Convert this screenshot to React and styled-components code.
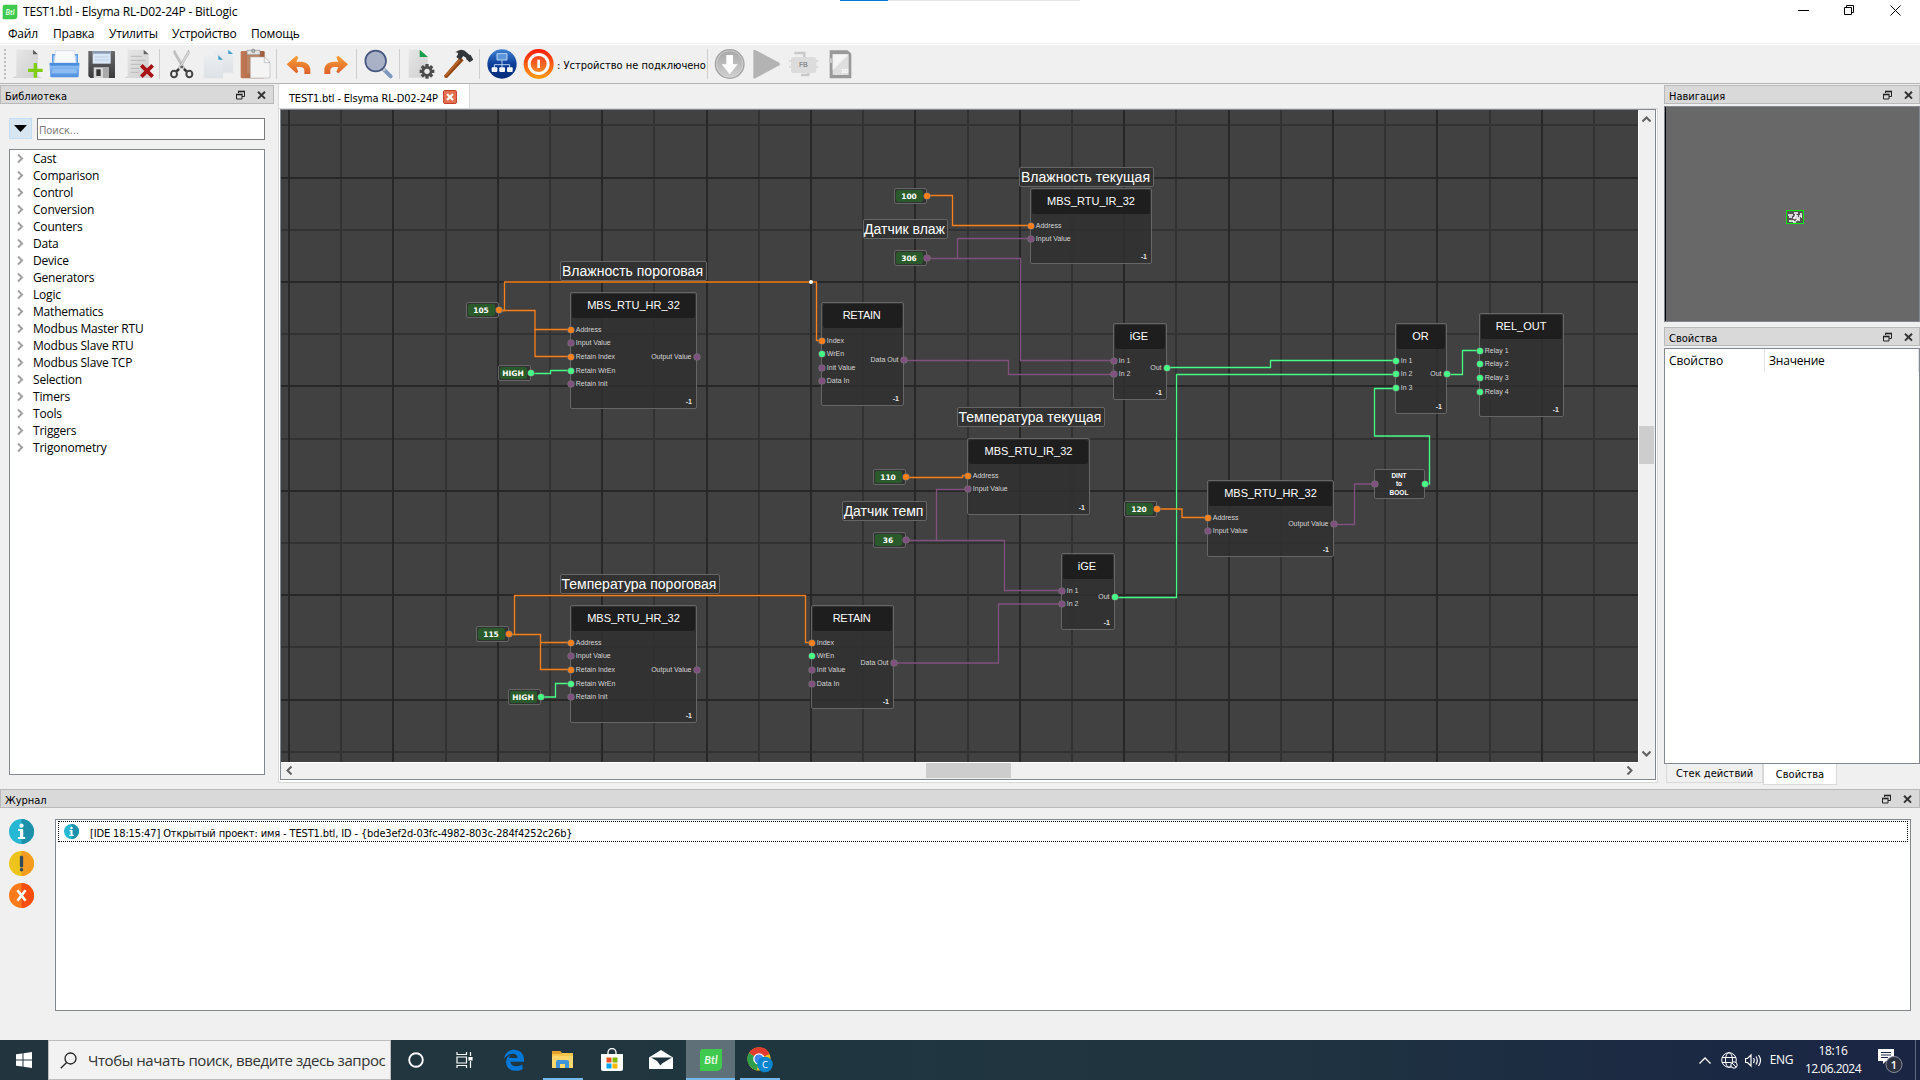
import React from 'react';
import styled, { createGlobalStyle, css } from 'styled-components';

const UI = `"Open Sans", "Noto Sans", sans-serif`;
const TAHOMA = `"DejaVu Sans Condensed", "DejaVu Sans", sans-serif`;
const SCENE = `"Liberation Sans", Arial, sans-serif`;

const Global = createGlobalStyle`
  *, *::before, *::after { box-sizing: border-box; }
  body { margin: 0; background: #f0f0f0; font-family: ${UI}; font-size: 12px; color: #000; overflow: hidden; }
  svg { display: block; flex: none; }
`;

const Screen = styled.div`
  width: 1920px; height: 1080px; display: flex; flex-direction: column; background: #f0f0f0; overflow: hidden;
`;
const Label = styled.span`
  font-family: ${p => (p.$tahoma ? TAHOMA : UI)};
  font-size: ${p => p.$size || (p.$tahoma ? 11 : 12)}px;
  letter-spacing: ${p => p.$ls || 0}px;
  color: ${p => p.$color || '#000'};
  white-space: pre; line-height: ${p => p.$lh || 16}px;
`;

/* ---------- window header ---------- */
const TitleBar = styled.header`
  height: 24px; flex: none; background: #fff; display: flex; align-items: center; padding: 0 2px; position: relative;
`;
const TitleText = styled.div` margin-left: 5px; flex: 1; padding-bottom: 1px; `;
const WindowButtons = styled.div` display: flex; height: 20px; margin-bottom: 4px; `;
const WindowButton = styled.div` width: 46px; display: flex; align-items: center; justify-content: center; `;
const TopProgress = styled.div`
  position: absolute; left: 840px; top: 0; width: 240px; height: 1px; background: linear-gradient(90deg, #0078d7 48px, #e5e5e5 48px);
`;
const MenuBar = styled.nav`
  height: 20px; flex: none; background: #fff; display: flex; align-items: center; padding-left: 8px; border-bottom: 1px solid #f0f0f0;
`;
const MenuItem = styled.div` width: ${p => p.$w}px; `;
const ToolBar = styled.div`
  height: 40px; flex: none; border-top: 1px solid #fff; border-bottom: 1px solid #b4b4b4; display: flex; align-items: center;
`;
const Grip = styled.div`
  width: 2px; height: 31px; margin: 0 3px 0 4px; background: repeating-linear-gradient(#bdbdbd 0 2px, transparent 2px 4px);
`;
const Slot = styled.div` width: 37px; height: 38px; flex: none; `;
const Sep = styled.div` width: 1px; height: 30px; margin: 0 3px 0 2px; background: #cfcfcf; flex: none; `;
const Status = styled.div` width: 148px; flex: none; padding-top: 2px; `;

/* ---------- work area ---------- */
const Work = styled.main` height: 705px; flex: none; display: flex; `;
const LeftDock = styled.aside` width: 278px; flex: none; display: flex; flex-direction: column; padding-top: 1px; `;
const DockTitle = styled.div`
  height: 19px; width: ${p => p.$w}; flex: none; background: #d9d9d9; border: 1px solid #b9b9b9;
  display: flex; align-items: center; padding: 2px ${p => p.$pad || 6}px 0 4px; margin-top: ${p => p.$top || 0}px;
`;
const DockName = styled.div` flex: 1; `;
const DockIcons = styled.div` display: flex; gap: 12px; padding-bottom: 2px; `;
const SearchRow = styled.div` display: flex; gap: 5px; margin: 14px 0 0 9px; height: 22px; `;
const FilterButton = styled.div`
  width: 23px; height: 21px; background: #d8e6f2; border: 1px solid #c4dff5; display: flex; align-items: center; justify-content: center;
`;
const SearchField = styled.div`
  width: 228px; height: 22px; background: #fff; border: 1px solid #7a7a7a; padding: 3px 0 0 1px; line-height: 16px;
`;
const Tree = styled.ul`
  list-style: none; margin: 9px 0 0 9px; padding: 0; width: 256px; height: 626px; background: #fff; border: 1px solid #828790;
`;
const TreeRow = styled.li` height: 17px; display: flex; align-items: center; padding-left: 6px; gap: 8px; `;

const Center = styled.section` width: 1380px; flex: none; display: flex; flex-direction: column; `;
const TabStrip = styled.div` height: 24px; display: flex; `;
const DocTab = styled.div`
  width: 192px; height: 24px; background: #fff; border-right: 1px solid #d9d9d9; border-left: 1px solid #d9d9d9; display: flex; align-items: center; padding: 2px 0 0 10px; gap: 5px;
`;
const DocName = styled.div` padding-top: 1px; `;
const TabPane = styled.div`
  height: 675px; background: #fff; border: 1px solid #d9d9d9; padding: 0 1px 2px 1px;
`;
const ViewFrame = styled.div`
  height: 671px; width: 1376px; border: 1px solid #828790; display: grid; grid-template-columns: 1357px 1fr; grid-template-rows: 652px 1fr; background: #f0f0f0;
`;
const Canvas = styled.div` position: relative; overflow: hidden; background: #414141; `;
const VBar = styled.div`
  background: #f0f0f0; border-left: 1px solid #fff; display: flex; flex-direction: column; align-items: center; padding: 5px 1px 4px 0;
`;
const VThumb = styled.div` width: 15px; height: 38px; background: #cdcdcd; margin: ${p => p.$before}px 0 auto; `;
const HBar = styled.div`
  background: #f0f0f0; border-top: 1px solid #fff; display: flex; align-items: center; padding: 0 4px 1px 4px;
`;
const HThumb = styled.div` width: 85px; height: 15px; background: #cdcdcd; margin: 0 auto 0 ${p => p.$before}px; `;

const RightDock = styled.aside` width: 256px; margin-left: 6px; flex: none; display: flex; flex-direction: column; padding-top: 1px; `;
const NavView = styled.div`
  width: 256px; height: 216px; margin-top: 2px; background: #686868; border: 1px solid #828790; box-shadow: inset 1px 0 0 #000; flex: none;
  display: flex; align-items: center; justify-content: center; padding: 7px 0 0 7px;
`;
const PropTable = styled.div`
  width: 256px; height: 416px; margin-top: 2px; background: #fff; border: 1px solid #828790; flex: none;
`;
const PropHead = styled.div` display: flex; height: 23px; `;
const PropCell = styled.div`
  width: ${p => p.$w}px; border-right: 1px solid #e3e3e3; padding: 3px 0 0 4px;
`;
const BottomTabs = styled.div` display: flex; padding-left: 2px; align-items: flex-start; `;
const BottomTab = styled.div`
  width: ${p => p.$w}px; height: ${p => (p.$on ? 21 : 19)}px; background: ${p => (p.$on ? '#fff' : '#f0f0f0')};
  border: 1px solid #d9d9d9; border-top: 0; text-align: center; padding-top: ${p => (p.$on ? 2 : 1)}px; line-height: 16px;
`;

/* ---------- journal ---------- */
const Journal = styled.section` height: 251px; flex: none; display: flex; flex-direction: column; `;
const JournalBody = styled.div` display: flex; padding: 11px 9px 0 9px; `;
const Filters = styled.div` width: 46px; display: flex; flex-direction: column; gap: 7px; `;
const Log = styled.div` width: 1856px; height: 192px; background: #fff; border: 1px solid #828790; padding: 1px 2px; `;
const LogRow = styled.div` height: 21px; border: 1px dotted #000; display: flex; align-items: center; padding-left: 5px; gap: 11px; `;
const LogText = styled.div` padding-top: 2px; `;

/* ---------- taskbar ---------- */
const TaskBar = styled.footer`
  height: 40px; flex: none; display: flex; background: linear-gradient(90deg, #22353f 0, #20363f 40%, #1f3440 65%, #1b2943 88%, #1a2544 100%);
`;
const Start = styled.div` width: 48px; display: flex; align-items: center; justify-content: center; `;
const TaskSearch = styled.div`
  width: 343px; background: #f2f2f2; border: 1px solid #bcbcbc; display: flex; align-items: center; padding-left: 11px; gap: 11px;
`;
const TaskButton = styled.div`
  width: 49px; height: 40px; flex: none; display: flex; align-items: center; justify-content: center; background: ${p => (p.$active ? '#607078' : 'transparent')};
  box-shadow: ${p => (p.$active ? 'inset 0 -2px #76b9ed' : 'none')};
  margin-left: ${p => p.$before || 0}px;
  ${p => p.$running && css` background: linear-gradient(#76b9ed, #76b9ed) center bottom / 40px 2px no-repeat; `}
`;
const Spacer = styled.div` flex: 1; `;
const Tray = styled.div` display: flex; align-items: center; padding-right: 1px; `;
const TrayCell = styled.div` width: ${p => p.$w}px; display: flex; flex-direction: column; align-items: center; `;
const ShowDesktop = styled.div` width: 5px; height: 40px; border-left: 1px solid #5c6a7c; `;

/* ---------- scene parts ---------- */
const Scene = styled.div` position: absolute; left: -281px; top: -110px; width: 1920px; height: 1080px; font-family: ${SCENE}; `;
const Wires = styled.svg` position: absolute; left: 0; top: 0; `;
const Block = styled.div`
  position: absolute; left: ${p => p.$x}px; top: ${p => p.$y}px; width: ${p => p.$w}px; height: ${p => p.$h}px;
  background: rgba(48, 48, 48, .88); border: 1px solid #666; border-radius: 2px; padding: 1px;
`;
const BlockTitle = styled.div`
  height: 24px; background: #1e1e1e; color: #fff; font-size: 11px; letter-spacing: ${p => p.$ls || 0}px; line-height: 23px; text-align: center; border-radius: 2px;
  padding-right: ${p => p.$pr || 0}px;
`;
const PortLayer = styled.div`
  position: absolute; left: ${p => p.$x}px; top: ${p => p.$y}px; width: ${p => p.$w}px; height: ${p => p.$h}px;
`;
const Port = styled.div`
  position: absolute; top: ${p => p.$y - 4}px; ${p => (p.$out ? 'right: -2.5px' : 'left: -2.2px')}; height: 8px;
  display: flex; flex-direction: ${p => (p.$out ? 'row-reverse' : 'row')}; align-items: center; gap: 2px;
  font-size: 7px; line-height: 8px; color: #d5d5d5; white-space: pre;
`;
const Dot = styled.i`
  width: 6px; height: 6px; border-radius: 50%; background: ${p => p.$c}; box-shadow: 0 0 0 .6px #777; flex: none;
`;
const Order = styled.div` position: absolute; right: 4px; bottom: 2px; font-size: 7px; font-weight: bold; line-height: 9px; color: #e8e8e8; `;
const Const = styled(Block)` padding: 1px 3px 1px 1px; `;
const ConstValue = styled.div`
  width: 27px; height: 12px; background: #2a5a2b; border-radius: 2px; color: #fff; text-align: center; padding-right: 1px;
  font: bold 7.5px/13px "DejaVu Sans", sans-serif;
`;
const Comment = styled(Block)`
  padding: 0 2px 0 0; font-size: 14px; line-height: 18px; text-align: center; color: #fff; white-space: pre;
`;
const Convert = styled(Block)`
  font-size: 6.5px; font-weight: bold; line-height: 8.4px; text-align: center; color: #fff; padding-right: 2px; padding-top: 2px;
`;

const O = '#fb8019', G = '#46fc86', V = '#80517f';

const blocks = [
  { t: 'MBS_RTU_HR_32', x: 570, y: 292, w: 127, h: 117, i: [['Address', O], ['Input Value', V], ['Retain Index', O], ['Retain WrEn', G], ['Retain Init', V]], o: ['Output Value', V, 64.8] },
  { t: 'RETAIN', x: 821, y: 302, w: 83, h: 104, i: [['Index', O], ['WrEn', G], ['Init Value', V], ['Data In', V]], o: ['Data Out', V, 58.4], ls: -.3, pr: 2, dy: .7 },
  { t: 'MBS_RTU_IR_32', x: 1030, y: 188, w: 122, h: 76, i: [['Address', O], ['Input Value', V]] },
  { t: 'iGE', x: 1113, y: 323, w: 54, h: 77, i: [['In 1', V], ['In 2', V]], o: ['Out', G, 44.6], pr: 2 },
  { t: 'OR', x: 1395, y: 323, w: 52, h: 91, i: [['In 1', G], ['In 2', G], ['In 3', G]], o: ['Out', G, 51.4], pr: 1 },
  { t: 'REL_OUT', x: 1479, y: 313, w: 85, h: 104, i: [['Relay 1', G], ['Relay 2', G], ['Relay 3', G], ['Relay 4', G]], pr: 1 },
  { t: 'MBS_RTU_HR_32', x: 1207, y: 480, w: 127, h: 77, i: [['Address', O], ['Input Value', V]], o: ['Output Value', V, 44.3] },
  { t: 'MBS_RTU_IR_32', x: 967, y: 438, w: 123, h: 77, i: [['Address', O], ['Input Value', V]] },
  { t: 'iGE', x: 1061, y: 553, w: 54, h: 77, i: [['In 1', V], ['In 2', V]], o: ['Out', G, 44.3], pr: 2 },
  { t: 'RETAIN', x: 811, y: 605, w: 83, h: 104, i: [['Index', O], ['WrEn', G], ['Init Value', V], ['Data In', V]], o: ['Data Out', V, 58], ls: -.3, pr: 2 },
  { t: 'MBS_RTU_HR_32', x: 570, y: 605, w: 127, h: 118, i: [['Address', O], ['Input Value', V], ['Retain Index', O], ['Retain WrEn', G], ['Retain Init', V]], o: ['Output Value', V, 64.8] },
];
const consts = [
  ['105', 466, 302, O], ['HIGH', 498, 365, G], ['100', 894, 188, O], ['306', 894, 250, V], ['110', 873, 469, O],
  ['36', 873, 532, V], ['120', 1124, 501, O], ['115', 476, 626, O], ['HIGH', 508, 689, G],
];
const comments = [
  ['Влажность пороговая', 560, 261, 147], ['Влажность текущая', 1019, 167, 135], ['Датчик влаж', 863, 219, 85],
  ['Температура текущая', 957, 407, 148], ['Датчик темп', 842, 501, 85], ['Температура пороговая', 560, 574, 160],
];
const wires = [
  [O, 'M499 310.5H504.5V282H816.5V340.5H821'], [O, 'M499 310.5H535V329.5H571'], [O, 'M535 329V356.5H571'],
  [G, 'M530 373.5H550.5V370.5H571'], [O, 'M927 195.5H952.5V225.5H1030'],
  [V, 'M927 258.5H1020.5V360.5H1114'], [V, 'M957.5 258V238.5H1030'], [V, 'M904 360.5H1008.5V374.5H1114'],
  [G, 'M1167 367.5H1270.5V360.5H1396'], [G, 'M1114 597.5H1176.5V374.5H1396'], [G, 'M1446 374.5H1462.5V350.5H1479'],
  [G, 'M1425 484H1429.5V436H1374.5V388.5H1396'], [O, 'M1157 509H1182V517.5H1208'],
  [V, 'M1334 524.5H1354.5V484H1375'], [O, 'M906 477.5H962.5V475.5H968'],
  [V, 'M906 540.5H1004.5V590.5H1062'], [V, 'M936.5 540V489.5H968'], [V, 'M893 663H998.5V604H1062'],
  [O, 'M509 634.5H514.5V595.5H805.5V642.5H811'], [O, 'M514 634.5H540.5V642.5H571'], [O, 'M540.5 642V669.5H571'],
  [G, 'M541 697H555.5V683.5H571'],
];

const gridMajorX = [289, 393, 498, 602, 707, 811, 915, 1020, 1124, 1229, 1333, 1437, 1542];
const gridMinorX = [341, 446, 550, 654, 759, 863, 968, 1072, 1176, 1281, 1385, 1490, 1594];
const gridMajorY = [178, 282, 386, 491, 595, 700];
const gridMinorY = [125, 230, 334, 439, 543, 647, 752];

const GridLines = ({ xs, ys, color }) => (
  <g fill={color}>
    {xs.map(x => <rect key={'x' + x} x={x - 1} y="110" width="2" height="652" />)}
    {ys.map(y => <rect key={'y' + y} x="281" y={y - 1} width="1357" height="2" />)}
  </g>
);

function NodeScene() {
  return (
    <Scene>
      <Wires width="1920" height="1080">
        <GridLines xs={gridMinorX} ys={gridMinorY} color="#323232" />
        <GridLines xs={gridMajorX} ys={gridMajorY} color="#272727" />
      </Wires>
      {blocks.map((b, n) => (
        <Block key={n} $x={b.x} $y={b.y} $w={b.w} $h={b.h}>
          <BlockTitle $ls={b.ls} $pr={b.pr}>{b.t}</BlockTitle>
          <Order>-1</Order>
        </Block>
      ))}
      {comments.map(([t, x, y, w]) => <Comment key={t} $x={x} $y={y} $w={w} $h={20}>{t}</Comment>)}
      <Convert $x={1374} $y={469} $w={51} $h={30}>DINT<br />to<br />BOOL</Convert>
      {consts.map(([t, x, y], n) => (
        <Const key={n} $x={x} $y={y} $w={33} $h={16}><ConstValue>{t}</ConstValue></Const>
      ))}
      <Wires width="1920" height="1080" fill="none" strokeWidth="1.3">
        {wires.map(([c, d], n) => <path key={n} d={d} stroke={c} />)}
        <circle cx="811" cy="282" r="2" fill="#fff" />
      </Wires>
      {blocks.map((b, n) => (
        <PortLayer key={n} $x={b.x} $y={b.y} $w={b.w} $h={b.h}>
          {b.i.map(([t, c], k) => <Port key={t} $y={37.8 + (b.dy || 0) + k * 13.6}><Dot $c={c} />{t}</Port>)}
          {b.o && <Port $out $y={b.o[2]}><Dot $c={b.o[1]} />{b.o[0]}</Port>}
        </PortLayer>
      ))}
      {consts.map(([t, x, y, c], n) => (
        <PortLayer key={n} $x={x} $y={y} $w={33} $h={16}><Port $out $y={8.4}><Dot $c={c} /></Port></PortLayer>
      ))}
      <PortLayer $x={1374} $y={469} $w={51} $h={30}>
        <Port $y={15}><Dot $c={V} /></Port><Port $out $y={15}><Dot $c={G} /></Port>
      </PortLayer>
    </Scene>
  );
}

/* ---------- icons ---------- */
const Tool = ({ children }) => <Slot><svg width="37" height="38" viewBox="0 0 111 114">{children}</svg></Slot>;
const FloatIcon = () => (
  <svg width="9" height="10" viewBox="0 0 9 10" fill="none" stroke="#222"><path d="M2.5 3V1.5H8.5V6.5H6" /><path d="M2 1.5h7" strokeWidth="1.6" /><path d="M.5 4.5H6V9H.5z" /><path d="M0 4.5h6.5" strokeWidth="1.6" /></svg>
);
const CloseIcon = () => (
  <svg width="9" height="10" viewBox="0 0 9 10" stroke="#333" strokeWidth="2"><path d="M1 1.8l7 6.8M8 1.8L1 8.6" /></svg>
);
const Chevron = ({ d, c = '#606060', w = 9, h = 9 }) => (
  <svg width={w} height={h} viewBox="0 0 9 9" fill="none" stroke={c} strokeWidth="2"><path d={d} /></svg>
);
const BtlIcon = ({ s }) => (
  <svg width={s} height={s} viewBox="0 0 24 24"><path d="M4 1h19v17a5 5 0 0 1-5 5H1V4a3 3 0 0 1 3-3z" fill="#3fc94e" /><text x="12" y="16" textAnchor="middle" fontFamily="Lato" fontStyle="italic" fontWeight="700" fontSize="11" fill="#e8ffe8">Btl</text></svg>
);
const InfoIcon = ({ s }) => (
  <svg width={s} height={s} viewBox="0 0 26 26"><circle cx="13" cy="13" r="13" fill="#25b7d3" /><path d="M13 0a13 13 0 0 1 0 26z" fill="#1e90a9" /><circle cx="13" cy="7" r="2.2" fill="#fff" /><path d="M9.5 10.5h5.3v8.3h2v2h-7.6v-2h2.200v-6.300H9.500z" fill="#fff" /></svg>
);
const WarnIcon = () => (
  <svg width="25" height="25" viewBox="0 0 26 26"><circle cx="13" cy="13" r="13" fill="#efc41a" /><path d="M13 0a13 13 0 0 1 0 26z" fill="#f39c1f" /><path d="M13 6.500v9" stroke="#324a5e" strokeWidth="3.400" strokeLinecap="round" /><circle cx="13" cy="19.600" r="1.800" fill="#324a5e" /></svg>
);
const ErrorIcon = () => (
  <svg width="25" height="25" viewBox="0 0 26 26"><circle cx="13" cy="13" r="13" fill="#ff7a1a" /><path d="M13 0a13 13 0 0 1 0 26z" fill="#ff4d0d" /><path d="M8.800 7.500l8.400 11M17.200 7.500l-8.400 11" stroke="#fff" strokeWidth="2.800" /></svg>
);

const HiddenSvg = styled.svg` position: absolute; `;
const Defs = () => (
  <HiddenSvg width="0" height="0">
    <defs>
      <linearGradient id="page" x1="0" y1="0" x2="1" y2="1"><stop offset="0" stopColor="#e6e6e6" /><stop offset="1" stopColor="#cfcfcf" /></linearGradient>
      <linearGradient id="pale" x1="0" y1="0" x2="0" y2="1"><stop offset="0" stopColor="#eceef0" /><stop offset="1" stopColor="#dde2e6" /></linearGradient>
      <linearGradient id="blue" x1="0" y1="0" x2="0" y2="1"><stop offset="0" stopColor="#9cc7f7" /><stop offset="1" stopColor="#4c8fe0" /></linearGradient>
      <linearGradient id="orange" x1="0" y1="0" x2="0" y2="1"><stop offset="0" stopColor="#f7a135" /><stop offset="1" stopColor="#e0602a" /></linearGradient>
      <linearGradient id="net" x1="0" y1="0" x2="0" y2="1"><stop offset="0" stopColor="#3e82d2" /><stop offset=".5" stopColor="#0d3f9b" /><stop offset="1" stopColor="#062a78" /></linearGradient>
      <linearGradient id="power" x1="0" y1="0" x2="0" y2="1"><stop offset="0" stopColor="#ff1a0c" /><stop offset="1" stopColor="#ff9d12" /></linearGradient>
      <linearGradient id="core" x1="0" y1="0" x2="0" y2="1"><stop offset="0" stopColor="#f5401a" /><stop offset="1" stopColor="#f58a2a" /></linearGradient>
      <linearGradient id="grey" x1="0" y1="0" x2="0" y2="1"><stop offset="0" stopColor="#a9a9a9" /><stop offset="1" stopColor="#cfcfcf" /></linearGradient>
      <linearGradient id="metal" x1="0" y1="0" x2="0" y2="1"><stop offset="0" stopColor="#6a6a6c" /><stop offset="1" stopColor="#3b3b3d" /></linearGradient>
      <linearGradient id="wood" x1="0" y1="0" x2="1" y2="0"><stop offset="0" stopColor="#c07a57" /><stop offset="1" stopColor="#a05c3a" /></linearGradient>
    </defs>
  </HiddenSvg>
);

const teeth = Array.from({ length: 8 }, (_, i) => i * 45);

function Tools() {
  return (
    <ToolBar>
      <Grip />
      <Tool>
        <path d="M10 99h88l-10-6H22z" fill="#d4d4d4" /><path d="M22 14h50l15 15v69H22z" fill="url(#page)" /><path d="M72 14v14h15z" fill="#5d5d5d" />
        <path d="M79 54v44M57 76h44" stroke="#7fce12" strokeWidth="10" />
      </Tool>
      <Tool>
        <path d="M18 27h78v40H18z" fill="#5b9be8" /><path d="M22 32h70v30H22z" fill="#a9cdf6" /><path d="M29 17h56l5 38H24z" fill="#f8f9fb" stroke="#c4ccd6" strokeWidth="1.5" />
        <path d="M10 53h91l-3 41a3 3 0 0 1-3 3H16a3 3 0 0 1-3-3z" fill="url(#blue)" /><path d="M11 54h89l-1 8H12z" fill="#4b8ede" /><path d="M20 72h70l3 13-76 0z" fill="#8dbcf3" />
      </Tool>
      <Tool>
        <path d="M16 18h77a3 3 0 0 1 3 3v78H22l-6-6z" fill="url(#metal)" /><path d="M29 18h54v38H29z" fill="#d8e6f6" /><path d="M29 18h54v8H29z" fill="#8b9bb0" /><path d="M35 36h42M35 45h42" stroke="#b4c4d8" strokeWidth="2" />
        <path d="M32 67h46v32H32z" fill="#d6d6d6" /><path d="M40 73h13v20H40z" fill="#333" /><path d="M60 67h18v32H60z" fill="#a9a9a9" />
      </Tool>
      <Tool>
        <path d="M13 99h84l-9-6H23z" fill="#d4d4d4" /><path d="M23 14h48l15 15v69H23z" fill="url(#page)" /><path d="M71 14v14h15z" fill="#666" />
        <path d="M32 34h34M32 46h44M32 58h32M32 70h26M32 82h26" stroke="#b9b9b9" strokeWidth="3" /><path d="M64 61l34 34M98 61L64 95" stroke="#a91217" strokeWidth="11" />
      </Tool>
      <Sep />
      <Tool>
        <path d="M34 15l36 62-6 2L32 24z" fill="#c4c4c4" stroke="#888" strokeWidth="1" /><path d="M77 15L41 77l6 2 32-55z" fill="#d9d9d9" stroke="#777" strokeWidth="1" />
        <circle cx="56" cy="66" r="4" fill="#555" /><path d="M48 72l-8 7M63 72l8 7" stroke="#333" strokeWidth="7" /><ellipse cx="33" cy="87" rx="9" ry="10" fill="none" stroke="#454545" strokeWidth="6" /><ellipse cx="79" cy="87" rx="9" ry="10" fill="none" stroke="#454545" strokeWidth="6" />
      </Tool>
      <Tool>
        <path d="M41 14h44l14 14v55H41z" fill="url(#pale)" /><path d="M85 14v13h14z" fill="#3f9fcc" /><path d="M11 31h44l14 14v55H11z" fill="url(#pale)" /><path d="M55 31v13h14z" fill="#3f9fcc" />
      </Tool>
      <Tool>
        <rect x="11" y="18" width="72" height="82" rx="4" fill="url(#wood)" /><path d="M30 25h38v60H30z" fill="#bd8362" /><path d="M30 16h12q3-6 13 0h14v13H30z" fill="#e3e3e3" stroke="#888" strokeWidth="2" /><circle cx="49" cy="18" r="5" fill="#bbb" stroke="#777" strokeWidth="2" />
        <path d="M40 36h42l17 17v46H40z" fill="#f4f4f4" stroke="#aaa" strokeWidth="1.500" /><path d="M82 36v17h17z" fill="#fff" stroke="#999" strokeWidth="1.500" />
      </Tool>
      <Sep />
      <Tool><path d="M20 58L49 32l6 5-6 13h13c19 0 29 12 29 24v13H73V76c0-6-4-10-12-10H49l6 14-6 5z" fill="url(#orange)" /></Tool>
      <Tool><path d="M93 58L64 32l-6 5 6 13H51c-19 0-29 12-29 24v13h18V76c0-6 4-10 12-10h12l-6 14 6 5z" fill="url(#orange)" /></Tool>
      <Sep />
      <Tool><path d="M68 70l24 24" stroke="#7d97bd" strokeWidth="12" strokeLinecap="round" /><path d="M66 68l9 9" stroke="#c9cdd4" strokeWidth="8" /><circle cx="47" cy="48" r="31" fill="#a9b1c6" stroke="#47567e" strokeWidth="5" /></Tool>
      <Sep />
      <Tool>
        <path d="M17 14h35l22 22v62H17z" fill="url(#page)" /><path d="M50 14v22h25z" fill="#18a048" />
        <g transform="translate(72 79)" fill="#4d4d4d">{teeth.map(a => <rect key={a} x="-5" y="-22" width="10" height="12" transform={`rotate(${a})`} />)}<circle r="16" /><circle r="8" fill="#ececec" /></g>
      </Tool>
      <Tool>
        <path d="M12 92l48-55 11 9-50 53q-8 1-9-7z" fill="#8f430f" /><path d="M15 90l46-52 4 4-47 53z" fill="#b9652a" /><path d="M46 22q20-16 36 2l6 5 4 1 8 14-11 8-10-9-1-5-8-5-9 12-12-9 6-10q-4-5-9-4z" fill="#333638" />
      </Tool>
      <Sep />
      <Tool>
        <circle cx="57" cy="57" r="44" fill="url(#net)" /><path d="M42 26h30v19H42z" fill="#5d96d8" stroke="#b8d4f2" strokeWidth="3" /><path d="M57 46v20M34 68v-9h46v9" fill="none" stroke="#b8cfec" strokeWidth="3" />
        <rect x="26" y="67" width="17" height="14" rx="3" fill="#fff" /><rect x="49" y="67" width="17" height="14" rx="3" fill="#fff" /><rect x="72" y="67" width="17" height="14" rx="3" fill="#fff" />
      </Tool>
      <Tool>
        <circle cx="56" cy="57" r="45" fill="url(#power)" /><circle cx="56" cy="57" r="33" fill="#fff" /><circle cx="56" cy="57" r="24" fill="url(#core)" /><path d="M56 44v25" stroke="#fff" strokeWidth="8" />
      </Tool>
      <Status><Label $tahoma>: Устройство не подключено</Label></Status>
      <Sep />
      <Tool><circle cx="56" cy="57" r="45" fill="#a3a3a3" /><circle cx="56" cy="57" r="40" fill="url(#grey)" stroke="#dedede" strokeWidth="2" /><path d="M46 30h20v28h14L56 88 32 58h14z" fill="#fff" /></Tool>
      <Tool><path d="M16 18q0-6 6-3l72 38q4 4 0 8L22 100q-6 3-6-3z" fill="#b3b3b3" /></Tool>
      <Tool>
        <path d="M28 24h30v14M70 82v8h-22" fill="none" stroke="#c8c8c8" strokeWidth="7" /><path d="M12 48h8M12 66h8M92 48h8M92 66h8" stroke="#c9c9c9" strokeWidth="3" />
        <rect x="18" y="36" width="76" height="48" rx="8" fill="#dcdcdc" /><text x="55" y="65" textAnchor="middle" fontFamily="Liberation Sans" fontWeight="700" fontSize="20" fill="#909090">FB</text>
      </Tool>
      <Tool>
        <path d="M23 16h54l11 10v74H23z" fill="#999" /><path d="M32 28h48v62H32z" fill="#dedede" /><path d="M32 28h48L32 76z" fill="#f4f4f4" /><path d="M22 40h8v14h-8z" fill="#c8c8c8" /><text x="68" y="83" textAnchor="middle" fontFamily="Liberation Sans" fontWeight="700" fontStyle="italic" fontSize="15" fill="#fff">SD</text>
      </Tool>
    </ToolBar>
  );
}

const library = ['Cast', 'Comparison', 'Control', 'Conversion', 'Counters', 'Data', 'Device', 'Generators', 'Logic', 'Mathematics', 'Modbus Master RTU', 'Modbus Slave RTU', 'Modbus Slave TCP', 'Selection', 'Timers', 'Tools', 'Triggers', 'Trigonometry'];

const Dock = ({ name, w, pad, top }) => (
  <DockTitle $w={w} $pad={pad} $top={top}><DockName><Label $tahoma>{name}</Label></DockName><DockIcons><FloatIcon /><CloseIcon /></DockIcons></DockTitle>
);

export default function App() {
  return (
    <Screen>
      <Global />
      <Defs />
      <TitleBar>
        <BtlIcon s={16} />
        <TitleText><Label $ls={-.2}>TEST1.btl - Elsyma RL-D02-24P - BitLogic</Label></TitleText>
        <WindowButtons>
          <WindowButton><svg width="11" height="11" stroke="#000"><path d="M0 5.500h11" /></svg></WindowButton>
          <WindowButton><svg width="11" height="11" stroke="#000" fill="none"><path d="M.5 2.500h7v7h-7zM2.500 2V.5h7v7H8" /></svg></WindowButton>
          <WindowButton><svg width="11" height="11" stroke="#000" fill="none"><path d="M.5.5l10 10M10.500.5l-10 10" /></svg></WindowButton>
        </WindowButtons>
        <TopProgress />
      </TitleBar>
      <MenuBar>
        {[['Файл', 45], ['Правка', 56], ['Утилиты', 63], ['Устройство', 79], ['Помощь', 60]].map(([t, w]) => (
          <MenuItem key={t} $w={w}><Label $ls={-.2}>{t}</Label></MenuItem>
        ))}
      </MenuBar>
      <Tools />
      <Work>
        <LeftDock>
          <Dock name="Библиотека" w="274px" pad={7} />
          <SearchRow>
            <FilterButton><svg width="13" height="7"><path d="M0 0h13L6.500 7z" /></svg></FilterButton>
            <SearchField><Label $tahoma $color="#7d7d7d" $ls={-.1}>Поиск...</Label></SearchField>
          </SearchRow>
          <Tree>
            {library.map(t => (
              <TreeRow key={t}><Chevron d="M2 .5l4 4-4 4" c="#a0a0a0" /><Label $ls={-.2}>{t}</Label></TreeRow>
            ))}
          </Tree>
        </LeftDock>
        <Center>
          <TabStrip>
            <DocTab>
              <DocName><Label $tahoma $ls={-.17}>TEST1.btl - Elsyma RL-D02-24P</Label></DocName>
              <svg width="14" height="14" viewBox="0 0 14 14"><rect x=".5" y=".5" width="13" height="13" rx="1.500" fill="#e0704f" stroke="#c9402c" /><path d="M4 4l6 6M10 4l-6 6" stroke="#fff" strokeWidth="2.200" /></svg>
            </DocTab>
          </TabStrip>
          <TabPane>
            <ViewFrame>
              <Canvas><NodeScene /></Canvas>
              <VBar><Chevron d="M.5 6.500l4-4 4 4" /><VThumb $before={302} /><Chevron d="M.5 2.500l4 4 4-4" /></VBar>
              <HBar><Chevron d="M6.500 .5l-4 4 4 4" /><HThumb $before={632} /><Chevron d="M2.500 .5l4 4-4 4" /></HBar>
            </ViewFrame>
          </TabPane>
        </Center>
        <RightDock>
          <Dock name="Навигация" w="256px" />
          <NavView>
            <svg width="20" height="16"><rect x=".5" y=".5" width="17" height="13" fill="#555" stroke="#00f000" />
              <path d="M2 5h5M3 7h3M3 11h5M7 12h3M8 3h4M9 6h3M7 8h7M10 4l-2 5M12 9l-2 2M13 6h3M14 4h2M15 7h1M12 10h2" stroke="#fff" strokeWidth="1.300" /></svg>
          </NavView>
          <Dock name="Свойства" w="256px" top={5} />
          <PropTable>
            <PropHead>
              <PropCell $w={100}><Label $ls={-.1}>Свойство</Label></PropCell>
              <PropCell $w={154}><Label $ls={-.2}>Значение</Label></PropCell>
            </PropHead>
          </PropTable>
          <BottomTabs>
            <BottomTab $w={97}><Label $tahoma>Стек действий</Label></BottomTab>
            <BottomTab $w={74} $on><Label $tahoma>Свойства</Label></BottomTab>
          </BottomTabs>
        </RightDock>
      </Work>
      <Journal>
        <Dock name="Журнал" w="1920px" pad={7} />
        <JournalBody>
          <Filters><InfoIcon s={25} /><WarnIcon /><ErrorIcon /></Filters>
          <Log>
            <LogRow><InfoIcon s={15} /><LogText><Label $tahoma $ls={-.14}>[IDE 18:15:47] Открытый проект: имя - TEST1.btl, ID - {'{bde3ef2d-03fc-4982-803c-284f4252c26b}'}</Label></LogText></LogRow>
          </Log>
        </JournalBody>
      </Journal>
      <TaskBar>
        <Start><svg width="16" height="16" fill="#fff"><path d="M0 2.300L6.500 1.400V7.500H0zM7.500 1.200L16 0V7.500H7.500zM0 8.500H6.500V14.600L0 13.700zM7.500 8.500H16V16L7.500 14.800z" /></svg></Start>
        <TaskSearch>
          <svg width="17" height="17" fill="none" stroke="#222" strokeWidth="1.300"><circle cx="10.500" cy="6.500" r="5.500" /><path d="M6.600 10.500L.8 16.300" /></svg>
          <Label $size={15} $ls={-.42} $color="#333">Чтобы начать поиск, введите здесь запрос</Label>
        </TaskSearch>
        <TaskButton><svg width="16" height="16"><circle cx="8" cy="8" r="6.800" fill="none" stroke="#fff" strokeWidth="1.900" /></svg></TaskButton>
        <TaskButton><svg width="17" height="16" fill="none" stroke="#fff" strokeWidth="1.200"><path d="M1 0v2.500h9.500V0M1 16v-2.500h9.500V16M1 5h9.500v6H1zM14.500 0v4M14.500 9v7" /><path d="M13 5.500h3v2.500h-3z" fill="#fff" /></svg></TaskButton>
        <TaskButton><svg width="22" height="22" viewBox="0 0 22 22"><path d="M1 10C2 4 6 .8 11 .8c6 0 10 4 10 9.700v2.200H7.500c.2 3.300 3 4.600 6 4.600 2.200 0 4.300-.6 6-1.700v4.600c-2 1.100-4.300 1.500-6.800 1.500C7 21.700 3 18.300 3 13.300c0-3.200 1.800-6 4.600-7.500-.8 1-1.200 2-1.400 3.200h8.300c0-2.700-1.500-4.300-4.300-4.300C6 4.700 3 7 1 10z" fill="#0078d7" /></svg></TaskButton>
        <TaskButton $running><svg width="22" height="20" viewBox="0 0 22 20"><path d="M0 1h8l2 2h11v15H0z" fill="#f7c64b" /><path d="M0 1h8l2 3H0z" fill="#e1a12c" /><path d="M0 6h21v12H0z" fill="#fbd76c" /><path d="M4 18v-6q0-2 2-2h9q2 0 2 2v6h-4v-4H8v4z" fill="#3f92dc" /></svg></TaskButton>
        <TaskButton><svg width="24" height="24" viewBox="0 0 24 24"><path d="M8 7V4.500a4 4 0 0 1 8 0V7" fill="none" stroke="#fff" strokeWidth="1.300" /><path d="M1 6h22v15a2 2 0 0 1-2 2H3a2 2 0 0 1-2-2z" fill="#fff" /><path d="M6.500 9.500h5v5h-5z" fill="#f25022" /><path d="M12.500 9.500h5v5h-5z" fill="#7fba00" /><path d="M6.500 15.500h5v5h-5z" fill="#00a4ef" /><path d="M12.500 15.500h5v5h-5z" fill="#ffb900" /></svg></TaskButton>
        <TaskButton><svg width="24" height="20" viewBox="0 0 24 20"><path d="M0 7.500L12 0l12 7.500V19H0z" fill="#fff" /><path d="M2 7.500h21l-10 6-1.500 2L8 11z" fill="#20343f" /></svg></TaskButton>
        <TaskButton $active $before={1}><BtlIcon s={24} /></TaskButton>
        <TaskButton $running>
          <svg width="26" height="26" viewBox="0 0 26 26"><circle cx="12" cy="12" r="11.500" fill="#f9c21b" /><path d="M12 12L2 6A11.500 11.500 0 0 1 22.500 7z" fill="#e33b2e" /><path d="M12 12L2 6a11.500 11.500 0 0 0 8 17.300z" fill="#2f9e4b" /><circle cx="12" cy="12" r="5.800" fill="#fff" /><circle cx="12" cy="12" r="4.500" fill="#4285f4" /><circle cx="18" cy="17.500" r="7.800" fill="#0a86cf" /><text x="18" y="21" textAnchor="middle" fontFamily="Open Sans" fontSize="9.500" fill="#fff">C</text></svg>
        </TaskButton>
        <Spacer />
        <Tray>
          <TrayCell $w={24}><svg width="12" height="7" fill="none" stroke="#fff" strokeWidth="1.300"><path d="M.5 6.500L6 1l5.500 5.500" /></svg></TrayCell>
          <TrayCell $w={24}><svg width="17" height="17" fill="none" stroke="#fff"><circle cx="8" cy="8" r="7.300" /><ellipse cx="8" cy="8" rx="3.500" ry="7.300" /><path d="M1 5.500h14M1 10.500h9" /><circle cx="13" cy="13" r="3.200" fill="#1b2843" /><path d="M11 11l4 4" /></svg></TrayCell>
          <TrayCell $w={24}><svg width="17" height="15" fill="none" stroke="#fff" strokeWidth="1.200"><path d="M.5 5.500h2L6 2v11L2.500 9.500h-2zM8.500 5q1.500 2.500 0 5M11 3.500q2.600 4 0 8M13.500 2q4 5.500 0 11" /></svg></TrayCell>
          <TrayCell $w={33}><Label $color="#fff" $ls={-.3}>ENG</Label></TrayCell>
          <TrayCell $w={70}><Label $color="#fff" $ls={-.35} $lh={18}>18:16</Label><Label $color="#fff" $ls={-.5} $lh={18}>12.06.2024</Label></TrayCell>
          <TrayCell $w={46}><svg width="26" height="26" viewBox="0 0 26 26"><path d="M0 2h16v12h-8l-3 3v-3H0z" fill="#fff" /><path d="M3 5.500h10M3 8h10M3 10.500h7" stroke="#1b2843" /><circle cx="16" cy="17.500" r="8" fill="#2b3140" stroke="#8a8f99" /><text x="16" y="21.500" textAnchor="middle" fontFamily="Open Sans" fontSize="11" fontWeight="600" fill="#fff">1</text></svg></TrayCell>
        </Tray>
        <ShowDesktop />
      </TaskBar>
    </Screen>
  );
}
